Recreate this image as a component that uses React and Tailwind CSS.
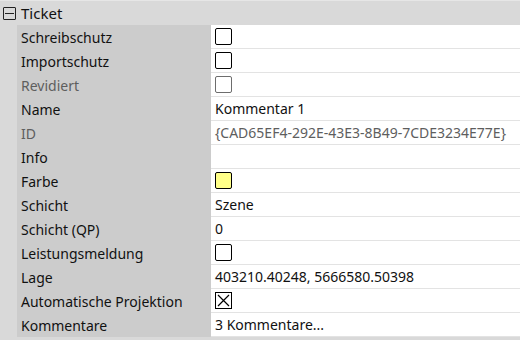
import React from 'react';

const rows = [
  { label: 'Schreibschutz', type: 'check' },
  { label: 'Importschutz', type: 'check' },
  { label: 'Revidiert', type: 'check', muted: true },
  { label: 'Name', value: 'Kommentar 1' },
  { label: 'ID', value: '{CAD65EF4-292E-43E3-8B49-7CDE3234E77E}', muted: true },
  { label: 'Info', value: '' },
  { label: 'Farbe', type: 'color' },
  { label: 'Schicht', value: 'Szene' },
  { label: 'Schicht (QP)', value: '0' },
  { label: 'Leistungsmeldung', type: 'check' },
  { label: 'Lage', value: '403210.40248, 5666580.50398' },
  { label: 'Automatische Projektion', type: 'cross' },
  { label: 'Kommentare', value: '3 Kommentare...' },
];

const Value = ({ row }) => {
  if (row.type === 'check') {
    return (
      <span
        className={`block w-[17px] h-[17px] rounded-[2px] border bg-white ${
          row.muted ? 'border-[#6d6d6d]' : 'border-black'
        }`}
      />
    );
  }
  if (row.type === 'color') {
    return <span className="block w-[17px] h-[17px] rounded-[2px] border border-black bg-[#ffff88]" />;
  }
  if (row.type === 'cross') {
    return (
      <svg width="17" height="17" viewBox="0 0 17 17" className="block">
        <rect x="0.5" y="0.5" width="16" height="16" fill="white" stroke="black" />
        <path d="M3 3 L14 14 M14 3 L3 14" stroke="black" strokeWidth="1.2" />
      </svg>
    );
  }
  return <span className={row.muted ? 'text-[#5e5e5e]' : 'text-[#111]'}>{row.value}</span>;
};

export default function App() {
  return (
    <div className="w-[520px] h-[340px] bg-[#d9d9d9] text-[14px] font-['Noto_Sans',sans-serif] overflow-hidden">
      <div className="h-[25px] flex items-center border-t border-[#e6e6e6]">
        <span className="ml-[3px] w-[13px] h-[13px] rounded-[1px] border border-[#222] flex items-center justify-center">
          <span className="block w-[9px] h-px bg-[#222]" />
        </span>
        <span className="ml-[5px] text-[#111] text-[15px]">Ticket</span>
      </div>
      <div className="pl-[17px] flex flex-col">
        {rows.map((row) => (
          <div key={row.label} className="flex h-[24px]">
            <div
              className={`w-[194px] bg-[#cccccc] pl-[4px] flex items-center ${
                row.muted ? 'text-[#5e5e5e]' : 'text-[#111]'
              }`}
            >
              {row.label}
            </div>
            <div className="flex-1 bg-white border-b border-[#e3e3e3] pl-[4px] flex items-center">
              <Value row={row} />
            </div>
          </div>
        ))}
      </div>
    </div>
  );
}
